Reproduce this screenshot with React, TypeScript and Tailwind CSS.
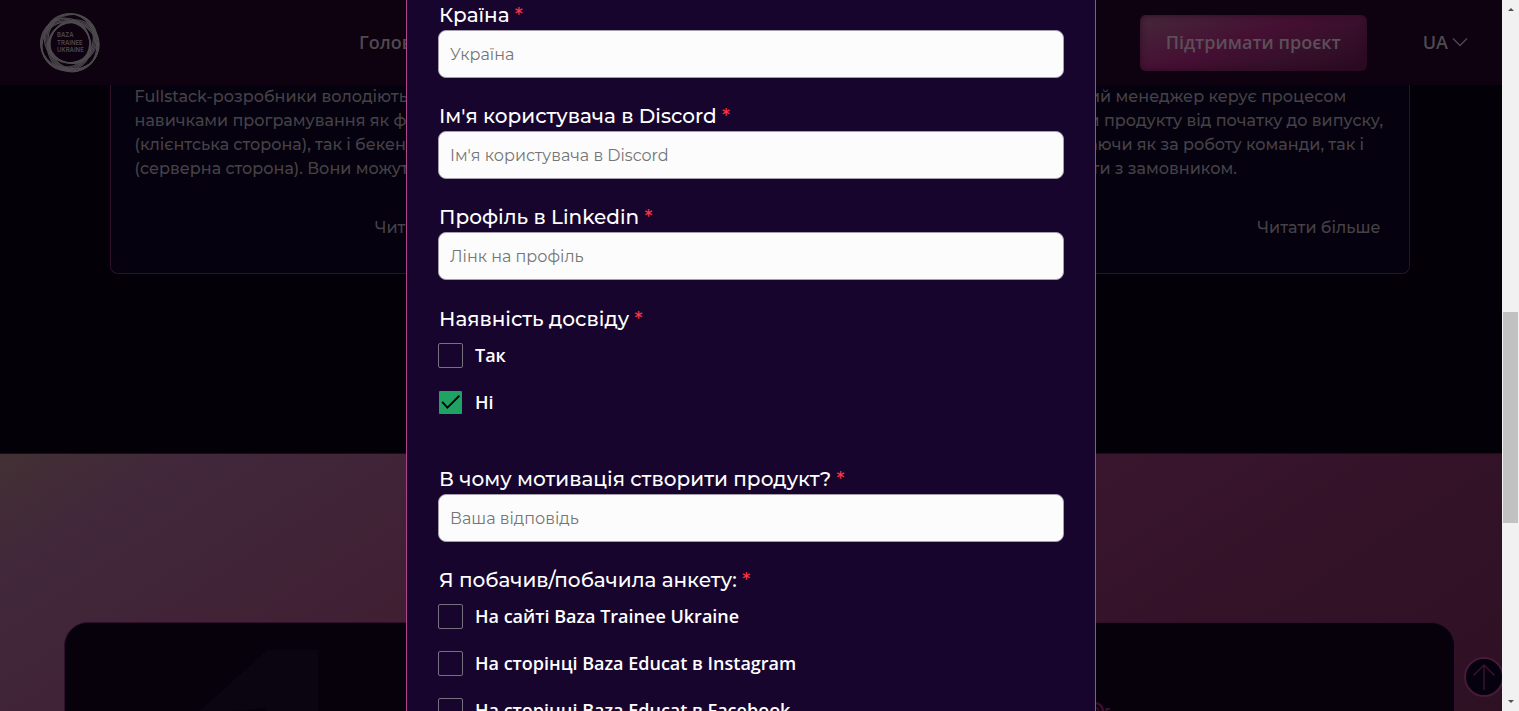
import React from 'react';

const body = "font-['Montserrat','Inter',sans-serif]";

function Logo() {
  const rings = [-104, -88, -72, -56, 16, 32, 48, 64, 136, 152, 168, 184];
  return (
    <svg viewBox="0 0 60 60" className="size-[60px]" role="img" aria-label="Baza Trainee Ukraine">
      <g fill="none" stroke="#4e4a4f" strokeWidth="1.1">
        {rings.map((a) => (
          <circle key={a} cx="34.8" cy="30" r="24.5" transform={`rotate(${a} 30 30)`} />
        ))}
      </g>
      <g fill="#4e4a4f" fontFamily="Inter, sans-serif" fontSize="6">
        <text x="17" y="24">BAZA</text>
        <text x="17" y="31.5">TRAINEE</text>
        <text x="17" y="39">UKRAINE</text>
      </g>
    </svg>
  );
}

function Header() {
  return (
    <header className="flex h-[85px] shrink-0 items-center bg-[#0e0110] pr-[51px] pl-10 font-['Open_Sans',sans-serif] text-lg font-semibold text-[#4e4a4f]">
      <a href="#home"><Logo /></a>
      <nav className="ml-[259px] flex-1 pb-[2px]">
        <a href="#main">Головна</a>
      </nav>
      <button
        type="button"
        className="h-14 w-[227px] rounded-md bg-[linear-gradient(160deg,#46283a_0%,#450f33_45%,#35102a_70%,#2a0820_100%)] pb-[2px] text-[#5c4f58] shadow-[inset_0_0_6px_#2c0a22]"
      >
        Підтримати проєкт
      </button>
      <button type="button" className="ml-14 flex items-center gap-1 pb-[2px]">
        UA
        <svg viewBox="0 0 16 10" className="h-[10px] w-4" fill="none" stroke="#4e4a4f" strokeWidth="1.3">
          <path d="M1 1.5 8 8.5 15 1.5" />
        </svg>
      </button>
    </header>
  );
}

function RoleCard({ lines }: { lines: string[] }) {
  return (
    <article className="flex flex-col rounded-b-lg border border-t-0 border-[#2f0f29] bg-[#06010e] px-6 pb-[33px]">
      <p className="h-24 text-base leading-6">
        {lines.map((l) => (
          <span key={l} className="block whitespace-nowrap">{l}</span>
        ))}
      </p>
      <a href="#more" className="mt-[35px] self-end pr-1 text-base leading-6">Читати більше</a>
    </article>
  );
}

function Page() {
  return (
    <div className={`flex h-full flex-col overflow-hidden bg-[#040008] font-medium text-[#454147] ${body}`}>
      <Header />
      <section className="mx-auto grid w-full max-w-[1300px] shrink-0 grid-cols-3 gap-6 pb-[179px]">
        <RoleCard lines={['Fullstack-розробники володіють', 'навичками програмування як фронтенд', '(клієнтська сторона), так і бекенд', '(серверна сторона). Вони можуть']} />
        <RoleCard lines={['Дизайнери створюють']} />
        <RoleCard lines={['Проєктний менеджер керує процесом', 'розробки продукту від початку до випуску,', 'відповідаючи як за роботу команди, так і', 'результати з замовником.']} />
      </section>
      <section className="h-[700px] shrink-0 border-t border-[#200a1b] bg-[linear-gradient(147deg,#433034_0%,#41283a_7%,#401f33_25%,#3c182f_38%,#35132a_52%,#2d1022_75%,#2a0e20_100%)] px-16 pt-[168px]">
        <div className="flex h-full items-start justify-between rounded-t-3xl border border-[#2f0f29] bg-[#06010b] pt-[27px] pr-[344px] pl-[131px]">
          <svg viewBox="0 0 122 200" className="h-[200px] w-[122px]">
            <path d="M71 0H122V200H71V58L0 64Z" fill="#0b0512" />
          </svg>
          <svg viewBox="0 0 24 24" className="mt-[51px] size-6" fill="none" stroke="#3d0d31" strokeWidth="2">
            <circle cx="9" cy="10" r="8" strokeWidth="2.500" />
            <circle cx="9" cy="10" r="3.500" strokeWidth="1.500" />
            <path d="M20.500 12V8H24" />
          </svg>
        </div>
      </section>
      <a href="#top" aria-label="Вгору" className="absolute right-[15px] bottom-[14px] grid size-10 place-items-center rounded-full border-2 border-[#47193a] bg-[#06010e]">
        <svg viewBox="0 0 24 28" className="h-7 w-6" fill="none" stroke="#38132f" strokeWidth="1.5">
          <path d="M12 27V2M1.500 12.500 12 2 22.500 12.500" />
        </svg>
      </a>
    </div>
  );
}

function Caption({ children }: { children: React.ReactNode }) {
  return (
    <>
      {children} <span className="text-[#fc3441]">*</span>
    </>
  );
}

function Field({ id, label, placeholder }: { id: string; label: string; placeholder: string }) {
  return (
    <div className="flex flex-col">
      <label htmlFor={id} className="pb-[2px] pl-px text-xl leading-[26px]"><Caption>{label}</Caption></label>
      <input id={id} type="text" placeholder={placeholder} className="h-12 w-full rounded-lg border border-[#a59fac] bg-[#fcfcfc] px-[11px] text-base font-normal text-[#20202a] placeholder:text-[#757575]" />
    </div>
  );
}

function Option({ label, checked = false }: { label: string; checked?: boolean }) {
  return (
    <label className="flex h-[25px] items-start gap-3 font-['Open_Sans',sans-serif] text-lg leading-6 font-semibold">
      <span className="relative size-[25px] shrink-0">
        <input type="checkbox" defaultChecked={checked} className="peer block size-[25px] appearance-none rounded-xs border border-[#77707f] checked:border-[#18052e] checked:bg-[#1ea362]" />
        <svg viewBox="0 0 24 24" className="pointer-events-none absolute inset-0 hidden peer-checked:block" fill="none" stroke="#06010e" strokeWidth="1.8">
          <path d="M4 11.500 9 17 20.500 5.500" />
        </svg>
      </span>
      {label}
    </label>
  );
}

function Choices({ legend, children }: { legend: string; children: React.ReactNode }) {
  return (
    <fieldset>
      <legend className="mb-[10px] pl-px text-xl leading-7"><Caption>{legend}</Caption></legend>
      <div className="flex flex-col gap-[22px]">{children}</div>
    </fieldset>
  );
}

function ApplicationForm() {
  return (
    <form className={`h-full w-full max-w-[690px] overflow-hidden border-x border-[#b0458f] bg-[#18052e] px-[31px] pt-[2px] font-medium text-white ${body}`}>
      <div className="flex flex-col gap-[25px]">
        <Field id="country" label="Країна" placeholder="Україна" />
        <Field id="discord" label="Ім'я користувача в Discord" placeholder="Ім'я користувача в Discord" />
        <Field id="linkedin" label="Профіль в Linkedin" placeholder="Лінк на профіль" />
        <Choices legend="Наявність досвіду">
          <Option label="Так" />
          <Option label="Ні" checked />
        </Choices>
        <div className="flex flex-col gap-6 pt-[26px]">
          <Field id="motivation" label="В чому мотивація створити продукт?" placeholder="Ваша відповідь" />
          <Choices legend="Я побачив/побачила анкету:">
            <Option label="На сайті Baza Trainee Ukraine" />
            <Option label="На сторінці Baza Educat в Instagram" />
            <Option label="На сторінці Baza Educat в Facebook" />
          </Choices>
        </div>
      </div>
    </form>
  );
}

function Scrollbar() {
  return (
    <div aria-hidden="true" className="flex w-[17px] shrink-0 flex-col items-center justify-between bg-[#f1f1f1] py-2">
      <svg viewBox="0 0 6 3" className="h-[3px] w-[6px]"><path d="M3 0 6 3H0Z" fill="#505050" /></svg>
      <div className="mt-[124px] h-[211px] w-[15px] bg-[#c1c1c1]" />
      <svg viewBox="0 0 6 3" className="h-[3px] w-[6px]"><path d="M0 0H6L3 3Z" fill="#505050" /></svg>
    </div>
  );
}

export default function App() {
  return (
    <main className="relative h-screen overflow-hidden">
      <Page />
      <div role="dialog" aria-modal="true" className="absolute inset-0 flex">
        <div className="flex min-w-0 flex-1 justify-center">
          <ApplicationForm />
        </div>
        <Scrollbar />
      </div>
    </main>
  );
}
